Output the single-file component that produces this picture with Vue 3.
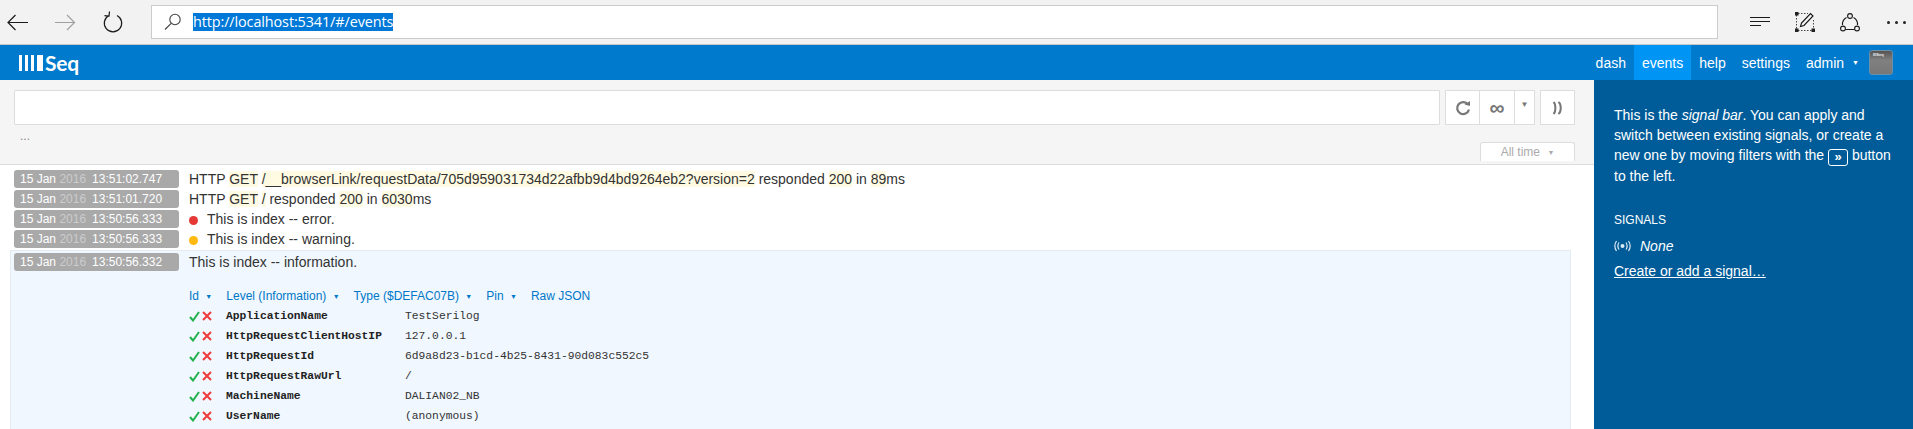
<script setup>
const rows = [
  { date: '15 Jan', year: '2016', time: '13:51:02.747', parts: [['HTTP '], ['GET', 1], [' '], ['/__browserLink/requestData/705d959031734d22afbb9d4bd9264eb2?version=2', 1], [' responded '], ['200', 1], [' in '], ['89', 1], ['ms']] },
  { date: '15 Jan', year: '2016', time: '13:51:01.720', parts: [['HTTP '], ['GET', 1], [' '], ['/', 1], [' responded '], ['200', 1], [' in '], ['6030', 1], ['ms']] },
  { date: '15 Jan', year: '2016', time: '13:50:56.333', level: 'error', parts: [['This is index -- error.']] },
  { date: '15 Jan', year: '2016', time: '13:50:56.333', level: 'warning', parts: [['This is index -- warning.']] },
]
const actions = ['Id', 'Level (Information)', 'Type ($DEFAC07B)', 'Pin']
const props = [
  ['ApplicationName', 'TestSerilog'],
  ['HttpRequestClientHostIP', '127.0.0.1'],
  ['HttpRequestId', '6d9a8d23-b1cd-4b25-8431-90d083c552c5'],
  ['HttpRequestRawUrl', '/'],
  ['MachineName', 'DALIAN02_NB'],
  ['UserName', '(anonymous)'],
]
</script>

<template>
  <div class="page">
    <header class="chrome">
      <div class="chrome-nav">
        <svg class="cicon" width="24" height="24" viewBox="0 0 24 24"><path d="M3 12.5H23M10.5 5 3 12.5 10.5 20" fill="none" stroke="#1a1a1a" stroke-width="1.2"/></svg>
        <svg class="cicon" width="24" height="24" viewBox="0 0 24 24"><path d="M2 12.5H21M14 5l7.5 7.5L14 20" fill="none" stroke="#a0a0a0" stroke-width="1.2"/></svg>
        <svg class="cicon" width="24" height="24" viewBox="0 0 24 24"><path d="M8 5.5A8.7 8.7 0 1 0 16 5.5M8.5 1.5 8 6l-4.5-.3" fill="none" stroke="#1a1a1a" stroke-width="1.2"/></svg>
      </div>
      <div class="address">
        <svg class="lens" width="18" height="18" viewBox="0 0 18 18"><circle cx="11" cy="6.5" r="5.2" fill="none" stroke="#444" stroke-width="1.1"/><path d="M7.2 10.3 1 16.5" stroke="#444" stroke-width="1.2"/></svg>
        <span class="url">http://localhost:5341/#/events</span>
      </div>
      <div class="chrome-tools">
        <svg width="20" height="14" viewBox="0 0 20 14"><path d="M0 2.5h20M0 6.5h20M0 10.5h11" stroke="#1a1a1a" stroke-width="1"/></svg>
        <svg width="20" height="20" viewBox="0 0 20 20"><path d="M1.5 3v15M3 1.5h10M18.500 8v10M3 18.500h14" stroke="#444" stroke-width="1" stroke-dasharray="1.500 1.500" fill="none"/><path d="M0 0h3.500v3.500H0zM0 16.500h3.500V20H0zM16.500 16.500H20V20h-3.500z" fill="#222"/><path d="M5.500 14.500 6.500 11 15.500 1.500 18 4l-9 9.500z" fill="none" stroke="#111" stroke-width="1.100"/></svg>
        <svg width="20" height="20" viewBox="0 0 20 20"><path d="M6.500 5.500A7.800 7.800 0 0 0 2.500 13M13.500 5.500A7.800 7.800 0 0 1 17.500 13M5.500 17.500h9" fill="none" stroke="#1a1a1a" stroke-width="1.100"/><circle cx="10" cy="4" r="2.400" fill="none" stroke="#1a1a1a" stroke-width="1.100"/><circle cx="3" cy="16.500" r="2.400" fill="none" stroke="#1a1a1a" stroke-width="1.100"/><circle cx="17" cy="16.500" r="2.400" fill="none" stroke="#1a1a1a" stroke-width="1.100"/></svg>
        <span class="dots"><i></i><i></i><i></i></span>
      </div>
    </header>

    <nav class="topnav">
      <div class="logo">
        <span class="bars"><i></i><i></i><i></i><i class="wide"></i></span>
        <span class="logo-text">Seq</span>
      </div>
      <div class="menu">
        <a>dash</a>
        <a class="active">events</a>
        <a>help</a>
        <a>settings</a>
        <a class="admin">admin <span class="caret-w">▼</span></a>
        <span class="avatar"><b>IIISeq</b></span>
      </div>
    </nav>

    <div class="body">
      <main class="main">
        <section class="filter">
          <div class="search-row">
            <div class="search"></div>
            <div class="btn-group">
              <span class="btn refresh">
                <svg width="16" height="16" viewBox="0 0 16 16"><path d="M13 4.500A6 6 0 1 0 14 9.500" fill="none" stroke="#777" stroke-width="2.200"/><path d="M9.500 4.500 15 6V1z" fill="#777"/></svg>
              </span>
              <span class="btn inf">∞</span>
              <span class="btn drop">▼</span>
            </div>
            <span class="btn single">
              <svg width="11" height="14" viewBox="0 0 11 14"><path d="M1.500 1c2.500 2 2.500 10 0 12M6.500 1c3 2 3 10 0 12" fill="none" stroke="#777" stroke-width="2"/></svg>
            </span>
          </div>
          <div class="ellipsis">...</div>
          <div class="tab-row"><span class="time-tab">All time <small>▼</small></span></div>
        </section>

        <section class="events">
          <div v-for="(r, i) in rows" :key="i" class="row">
            <span class="stamp">{{ r.date }} <em>{{ r.year }}</em><span class="clock">{{ r.time }}</span></span>
            <span class="msg">
              <span v-if="r.level" class="dot" :class="r.level"></span>
              <template v-for="(p, j) in r.parts" :key="j"><mark v-if="p[1]">{{ p[0] }}</mark><template v-else>{{ p[0] }}</template></template>
            </span>
          </div>

          <article class="detail">
            <div class="row inner">
              <span class="stamp">15 Jan <em>2016</em><span class="clock">13:50:56.332</span></span>
              <span class="msg">This is index -- information.</span>
            </div>
            <div class="actions">
              <a v-for="a in actions" :key="a">{{ a }} <small>▼</small></a>
              <a>Raw JSON</a>
            </div>
            <div v-for="p in props" :key="p[0]" class="prop">
              <svg width="11" height="11" viewBox="0 0 11 11"><path d="M1 6l3 3.500L10 1" fill="none" stroke="#22b14c" stroke-width="2"/></svg>
              <svg class="cross" width="10" height="10" viewBox="0 0 10 10"><path d="M1 1l8 8M9 1l-8 8" stroke="#ee3a3a" stroke-width="2"/></svg>
              <span class="pname">{{ p[0] }}</span>
              <span class="pval">{{ p[1] }}</span>
            </div>
          </article>
        </section>
      </main>

      <aside class="signals">
        <p class="intro">This is the <em>signal bar</em>. You can apply and switch between existing signals, or create a new one by moving filters with the <kbd>»</kbd> button to the left.</p>
        <h4>SIGNALS</h4>
        <div class="none">
          <svg width="17" height="12" viewBox="0 0 17 12"><circle cx="8.500" cy="6" r="2" fill="#dfeaf3"/><path d="M5 2.500c-1.300 2-1.300 5 0 7M12 2.500c1.300 2 1.300 5 0 7M2.500 1c-2 3-2 7 0 10M14.500 1c2 3 2 7 0 10" fill="none" stroke="#dfeaf3" stroke-width="1.200"/></svg>
          <em>None</em>
        </div>
        <a class="create">Create or add a signal…</a>
      </aside>
    </div>
  </div>
</template>

<style>
html, body { margin: 0; overflow: hidden; }
</style>

<style scoped>
.page { width: 1913px; height: 429px; display: flex; flex-direction: column; overflow: hidden; font: 14px/20px "Liberation Sans", Arial, sans-serif; color: #333; background: #fff; }
.chrome { height: 44px; flex: none; display: flex; align-items: center; background: #f2f2f2; border-bottom: 1px solid #c8c8c8; }
.chrome-nav { width: 151px; flex: none; display: flex; gap: 24px; padding-left: 5px; box-sizing: border-box; align-items: center; }
.address { width: 1567px; height: 34px; box-sizing: border-box; margin-top: -1px; background: #fff; border: 1px solid #ccc; display: flex; align-items: center; padding-left: 12px; gap: 11px; }
.url { font: 14.4px/18px "Open Sans", sans-serif; background: #0078d7; color: #fff; letter-spacing: -0.1px; }
.chrome-tools { flex: 1; display: flex; align-items: center; padding-left: 32px; gap: 25px; }
.dots { display: flex; gap: 5px; margin-left: 2px; }
.dots i { width: 3px; height: 3px; border-radius: 50%; background: #222; }

.topnav { height: 35px; flex: none; background: #007acc; display: flex; align-items: center; justify-content: space-between; color: #fff; }
.logo { display: flex; align-items: center; padding-left: 19px; }
.bars { display: flex; gap: 3px; }
.bars i { width: 3px; height: 16px; background: #fff; }
.bars i.wide { width: 6px; }
.logo-text { font: 700 21px/24px "Lato", sans-serif; margin-left: 2px; letter-spacing: -.2px; }
.menu { display: flex; align-items: center; height: 100%; padding-right: 20px; }
.menu a { height: 100%; display: flex; align-items: center; padding: 0 8px; margin-left: 0; box-sizing: border-box; }
.menu a + a { margin-left: 0; }
.menu a.active { background: #0094f5; }
.menu a.admin { padding-right: 10px; gap: 8px; }
.caret-w { font-size: 7px; }
.avatar { width: 24px; height: 25px; box-sizing: border-box; border-radius: 3px; background: linear-gradient(#555, #808080 40%, #777); border: 1px solid #6d8ea8; display: block; padding-left: 3px; }
.avatar b { display: block; font: 700 4px/8px "Liberation Sans", sans-serif; color: #eee; }

.body { flex: 1; display: flex; min-height: 0; }
.main { flex: 1; min-width: 0; display: flex; flex-direction: column; }
.filter { height: 85px; flex: none; box-sizing: border-box; background: #f5f5f5; border-bottom: 1px solid #ddd; padding: 10px 19px 0 14px; }
.search-row { display: flex; height: 35px; }
.search { flex: 1; background: #fff; border: 1px solid #ddd; border-radius: 1px; }
.btn-group { display: flex; margin-left: 5px; border: 1px solid #ddd; background: #fff; }
.btn { display: flex; align-items: center; justify-content: center; color: #777; background: #fff; box-sizing: border-box; }
.btn-group .btn + .btn { border-left: 1px solid #ddd; }
.refresh { width: 33px; }
.inf { width: 35px; font-size: 21px; font-weight: 700; }
.drop { width: 20px; font-size: 8px; padding-bottom: 6px; }
.single { width: 35px; margin-left: 5px; border: 1px solid #ddd; }
.ellipsis { font-size: 12px; line-height: 12px; margin: 5px 0 0 6px; color: #888; height: 12px; }
.tab-row { display: flex; justify-content: flex-end; margin-top: 0; }
.time-tab { width: 95px; height: 19px; box-sizing: border-box; background: #fff; border: 1px solid #ddd; border-bottom: 0; border-radius: 3px 3px 0 0; color: #aaa; font-size: 12px; line-height: 19px; text-align: center; position: relative; }
.time-tab small { font-size: 7px; margin-left: 4px; vertical-align: 1px; }

.events { flex: 1; padding-top: 5px; min-height: 0; }
.row { height: 20px; display: flex; padding-left: 14px; align-items: flex-start; }
.stamp { width: 165px; height: 18px; box-sizing: border-box; flex: none; background: #a9a9a9; border-radius: 3px; color: #fff; font-size: 12px; line-height: 19px; padding-left: 6px; white-space: pre; }
.stamp em { font-style: normal; color: #ccc; }
.clock { margin-left: 6px; }
.msg { margin-left: 10px; line-height: 20px; margin-top: -1px; color: #333; white-space: nowrap; }
mark { background: #fffbe3; color: #333; }
.dot { display: inline-block; width: 9px; height: 9px; border-radius: 50%; margin-right: 9px; vertical-align: -0.5px; }
.dot.error { background: #e53935; }
.dot.warning { background: #ffb90f; }

.detail { margin: 0 23px 0 10px; height: 200px; background: #f0f7fe; border: 1px solid #e3ebf3; border-bottom: 0; box-sizing: border-box; padding-top: 2px; }
.row.inner { padding-left: 3px; }
.actions { display: flex; gap: 12px; margin: 13px 0 0 178px; height: 20px; font-size: 12px; color: #0078c8; }
.actions a { display: block; margin-right: 2px; }
.actions small { font-size: 7px; margin-left: 3px; vertical-align: 1px; }
.prop { display: flex; align-items: center; height: 20px; margin-left: 178px; }
.prop:first-of-type { margin-top: 4px; }
.cross { margin-left: 2px; }
.pname { width: 179px; margin-left: 14px; font: 700 11.3px/20px "Liberation Mono", monospace; color: #222; }
.pval { font: 11.3px/20px "Liberation Mono", monospace; color: #333; white-space: pre; }

.signals { width: 319px; flex: none; box-sizing: border-box; background: #005c99; color: #fff; padding: 25px 20px 0; }
.intro { margin: 0; line-height: 20px; }
kbd { display: inline-block; width: 20px; height: 17px; box-sizing: border-box; border: 1px solid #fff; border-radius: 3px; text-align: center; font: 700 13px/14px "Liberation Sans", sans-serif; vertical-align: -1px; }
h4 { margin: 24px 0 0; font-size: 12px; font-weight: 400; line-height: 20px; }
.none { display: flex; align-items: center; gap: 9px; margin-top: 6px; height: 20px; }
.create { display: block; margin-top: 5px; text-decoration: underline; }
</style>
